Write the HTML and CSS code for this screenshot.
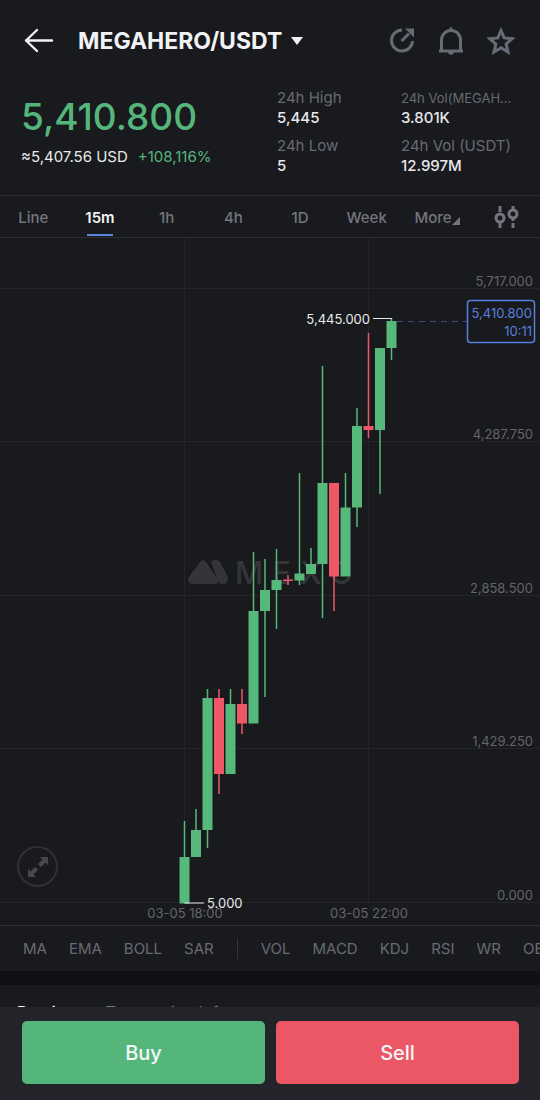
FILE: index.html
```html
<!DOCTYPE html>
<html lang="en">
<head>
    <meta charset="utf-8">
    <title>MEGAHERO/USDT</title>
    <meta name="viewport" content="width=device-width, initial-scale=1.0">
    <link rel="stylesheet" href="styles.css">
</head>
<body>
    <header class="topbar">
        <button class="icon-btn" aria-label="Back">
            <svg width="30" height="26" viewBox="0 0 30 26" fill="none" stroke="#f1f2f5" stroke-width="2.4" stroke-linecap="round" stroke-linejoin="round">
                <path d="M28 12.500H2M13 2 2 12.500l11 10.500"/>
            </svg>
        </button>
        <button class="pair">
            MEGAHERO/USDT
            <svg width="14" height="10" viewBox="0 0 14 10"><path d="M1 1h12L7 9z" fill="#f1f2f5"/></svg>
        </button>
        <div class="actions">
            <button class="icon-btn" aria-label="Share">
                <svg width="28" height="28" viewBox="0 0 28 28" fill="none" stroke="#686a76" stroke-width="3">
                    <path d="M15 3A10.500 10.500 0 1 0 25.500 14"/>
                    <path d="M14.500 14 22 6.500"/>
                    <path d="M18 1.500h9v9z" fill="#686a76" stroke="none"/>
                </svg>
            </button>
            <button class="icon-btn" aria-label="Alerts">
                <svg width="28" height="28" viewBox="0 0 28 28" fill="none" stroke="#686a76" stroke-width="3">
                    <path d="M4.500 23V13a9.500 9.500 0 0 1 19 0v10M2 24h24M14 .5v3"/>
                    <path d="M11 25h6l-1 2.500h-4z" fill="#686a76" stroke="none"/>
                </svg>
            </button>
            <button class="icon-btn" aria-label="Favorite">
                <svg width="28" height="28" viewBox="0 0 28 28" fill="none" stroke="#686a76" stroke-width="3">
                    <path d="M14 3.500l3.200 7.400 8 .8-6.100 5.300 1.900 8L14 20.800 7 25l1.900-8-6.100-5.300 8-.8z"/>
                </svg>
            </button>
        </div>
    </header>

    <section class="quote">
        <div class="quote-main">
            <div class="last-price">5,410.800</div>
            <div class="fiat"><span>≈5,407.56 USD</span><span class="up">+108,116%</span></div>
        </div>
        <dl class="stats">
            <div><dt>24h High</dt><dd>5,445</dd></div>
            <div><dt class="small">24h Vol(MEGAH...</dt><dd>3.801K</dd></div>
            <div><dt>24h Low</dt><dd>5</dd></div>
            <div><dt>24h Vol (USDT)</dt><dd>12.997M</dd></div>
        </dl>
    </section>

    <nav class="periods">
        <button>Line</button>
        <button class="active">15m</button>
        <button>1h</button>
        <button>4h</button>
        <button>1D</button>
        <button>Week</button>
        <button class="more">More<svg width="8" height="8" viewBox="0 0 8 8"><path d="M8 0v8H0z" fill="#74757f"/></svg></button>
        <button class="settings" aria-label="Chart settings">
            <svg width="26" height="24" viewBox="0 0 26 24" fill="none" stroke="#74757f" stroke-width="3">
                <path d="M6 1v6M6 18v5M19 1v3M19 14v2M19 18v5"/>
                <circle cx="6" cy="13" r="4"/>
                <circle cx="19" cy="9" r="4"/>
            </svg>
        </button>
    </nav>

    <main class="chart">
        <svg class="candles" viewBox="0 238 540 687">
            <g class="grid">
                <path d="M0 288.500H540M0 441.500H540M0 595.500H540M0 748.500H540M0 902.500H540"/>
                <path d="M184.500 238V902M368.500 238V902"/>
            </g>

            <g class="watermark">
                <path d="M200 562q3-4 6 0l11 16q3 6-3 6h-20q-8 0-5-7zM211 562q4-5 9 0l7 13q3 7-3 9-4 1-6-3z"/>
                <text x="235" y="584">MEXC</text>
            </g>

            <path class="last-line" d="M397 321.500H467"/>

            <g class="wick up">
                <path d="M184.500 821V857M196 809V830M207.500 689V848M230.500 689V704M253.500 552V611M265 559V697M276.500 549V629"/>
                <path d="M299.500 473V585M311 548V564M322.500 366V618M345.500 473V508M357 408V527M380 348V494M391.500 318V360"/>
            </g>
            <g class="wick down">
                <path d="M219 689V794M242 689V734M288 575V585M334 483V611M368.500 333V438"/>
            </g>
            <g class="body up">
                <path d="M184.500 857V903.500M196 830V857M207.500 698V830M230.500 704V774M253.500 611V723.500M265 590V611M276.500 580V590"/>
                <path d="M299.500 573.500V580.500M311 564V574M322.500 483V564M345.500 507.500V576.500M357 426V507.500M380 348V430M391.500 321V348"/>
            </g>
            <g class="body down">
                <path d="M219 698V774M242 704V723.500M288 579.500V581M334 483V576.500M368.500 426V430"/>
            </g>

            <path class="leader" d="M373 318.500H392M184.500 903H204"/>
            <text class="mark" x="370" y="324" text-anchor="end">5,445.000</text>
            <text class="mark" x="207" y="908">5.000</text>

            <g class="axis" text-anchor="end">
                <text x="533" y="286">5,717.000</text>
                <text x="533" y="439">4,287.750</text>
                <text x="533" y="593">2,858.500</text>
                <text x="533" y="746">1,429.250</text>
                <text x="533" y="900">0.000</text>
            </g>
            <g class="axis" text-anchor="middle">
                <text x="185" y="918">03-05 18:00</text>
                <text x="369" y="918">03-05 22:00</text>
            </g>

            <g class="last-tag" text-anchor="end">
                <rect x="467.500" y="300.500" width="67" height="42" rx="3"/>
                <text x="532" y="318">5,410.800</text>
                <text x="532" y="336">10:11</text>
            </g>
        </svg>
        <button class="expand" aria-label="Full screen">
            <svg width="22" height="22" viewBox="0 0 22 22" fill="#48494e">
                <path d="M13 1h8v8l-2.500-2.500-4.500 4.500-3-3L15.500 3.500zM9 21H1v-8l2.500 2.500L8 11l3 3-4.500 4.500z"/>
            </svg>
        </button>
    </main>

    <nav class="indicators">
        <button>MA</button>
        <button>EMA</button>
        <button>BOLL</button>
        <button>SAR</button>
        <span class="divider"></span>
        <button>VOL</button>
        <button>MACD</button>
        <button>KDJ</button>
        <button>RSI</button>
        <button>WR</button>
        <button>OBV</button>
    </nav>

    <section class="details">
        <button class="active">Posting</button>
        <button>Transaction Info</button>
    </section>

    <footer class="trade">
        <button class="buy">Buy</button>
        <button class="sell">Sell</button>
    </footer>
</body>
</html>
```
FILE: styles.css
```css
* {
    box-sizing: border-box;
}

body {
    margin: 0;
    background: #191a1d;
    color: #e8e9ec;
    font-family: Inter, "Liberation Sans", sans-serif;
    font-size: 15px;
}

button {
    padding: 0;
    border: none;
    background: none;
    color: inherit;
    font: inherit;
    cursor: pointer;
}

svg {
    display: block;
}

.topbar {
    display: flex;
    align-items: center;
    height: 82px;
    padding: 0 25px 0 24px;
}

.pair {
    display: flex;
    align-items: center;
    gap: 8px;
    margin-left: 24px;
    color: #f1f2f5;
    font-size: 23px;
    font-weight: 700;
}

.actions {
    display: flex;
    gap: 22px;
    margin-left: auto;
}

.quote {
    display: flex;
    justify-content: space-between;
    height: 113px;
    padding: 6px 22px 0 21px;
}

.last-price {
    margin-top: 7px;
    color: #55b67c;
    font-size: 37px;
    font-weight: 500;
    line-height: 44px;
}

.fiat {
    display: flex;
    gap: 10px;
    margin-top: 8px;
    line-height: 20px;
}

.up {
    color: #55b67c;
}

.stats {
    display: grid;
    grid-template-columns: 124px 117px;
    grid-auto-rows: 48px;
    margin: 0;
}

.stats dt {
    color: #686a74;
    line-height: 20px;
    white-space: nowrap;
}

.stats dt.small {
    font-size: 13px;
}

.stats dd {
    margin: 0;
    font-weight: 500;
    line-height: 20px;
}

.periods {
    display: grid;
    grid-template-columns: repeat(6, 1fr) 74px 66px;
    height: 43px;
    border-top: 1px solid #2d2e32;
    border-bottom: 1px solid #2d2e32;
    color: #74757f;
    font-weight: 500;
}

.periods button {
    display: flex;
    align-items: center;
    justify-content: center;
    position: relative;
    padding-top: 2px;
}

.periods .settings {
    padding-top: 0;
}

.periods .active {
    color: #f1f2f5;
    font-weight: 600;
}

.periods .active::after {
    content: '';
    position: absolute;
    bottom: 1px;
    width: 26px;
    height: 2px;
    background: #5b84dd;
}

.periods .more svg {
    align-self: flex-end;
    margin-bottom: 12px;
}

.chart {
    position: relative;
}

.candles {
    width: 100%;
    font-size: 13px;
}

.grid {
    stroke: #242529;
}

.watermark {
    fill: #343539;
}

.watermark text {
    font-size: 31px;
    font-weight: 500;
    letter-spacing: 9px;
}

.last-line {
    stroke: #3a4c80;
    stroke-dasharray: 6 5;
}

.wick {
    stroke-width: 1.5;
}

.body {
    stroke-width: 10;
}

.wick.up,
.body.up {
    stroke: #57b87c;
}

.wick.down,
.body.down {
    stroke: #ee5767;
}

.leader {
    stroke: #e8e9ec;
}

.mark {
    fill: #e8e9ec;
}

.axis {
    fill: #64656b;
}

.last-tag rect {
    fill: #191a1d;
    stroke: #5580dd;
    stroke-width: 1.5;
}

.last-tag text {
    fill: #5580dd;
}

.expand {
    display: flex;
    align-items: center;
    justify-content: center;
    position: absolute;
    left: 17px;
    bottom: 38px;
    width: 41px;
    height: 41px;
    border: 2px solid #303135;
    border-radius: 50%;
}

.indicators {
    display: flex;
    align-items: center;
    gap: 22px;
    height: 46px;
    padding-left: 23px;
    overflow: hidden;
    border-top: 1px solid #303135;
    color: #686a74;
}

.divider {
    flex: none;
    width: 1px;
    height: 21px;
    margin: 0 1px;
    background: #34353a;
}

.details {
    display: flex;
    align-items: flex-start;
    gap: 30px;
    height: 128px;
    padding: 17px 17px 0;
    border-top: 14px solid #0f1013;
    color: #74757f;
    font-size: 16px;
    line-height: 20px;
}

.details .active {
    color: #f1f2f5;
    font-weight: 600;
}

.trade {
    display: flex;
    gap: 11px;
    position: fixed;
    right: 0;
    bottom: 0;
    left: 0;
    padding: 14px 21px 16px 22px;
    background: #232429;
}

.trade button {
    flex: 1;
    height: 63px;
    border-radius: 5px;
    color: #f4f8f6;
    font-size: 20px;
    font-weight: 500;
}

.trade .buy {
    background: #55b67c;
}

.trade .sell {
    background: #ec5766;
}
```
